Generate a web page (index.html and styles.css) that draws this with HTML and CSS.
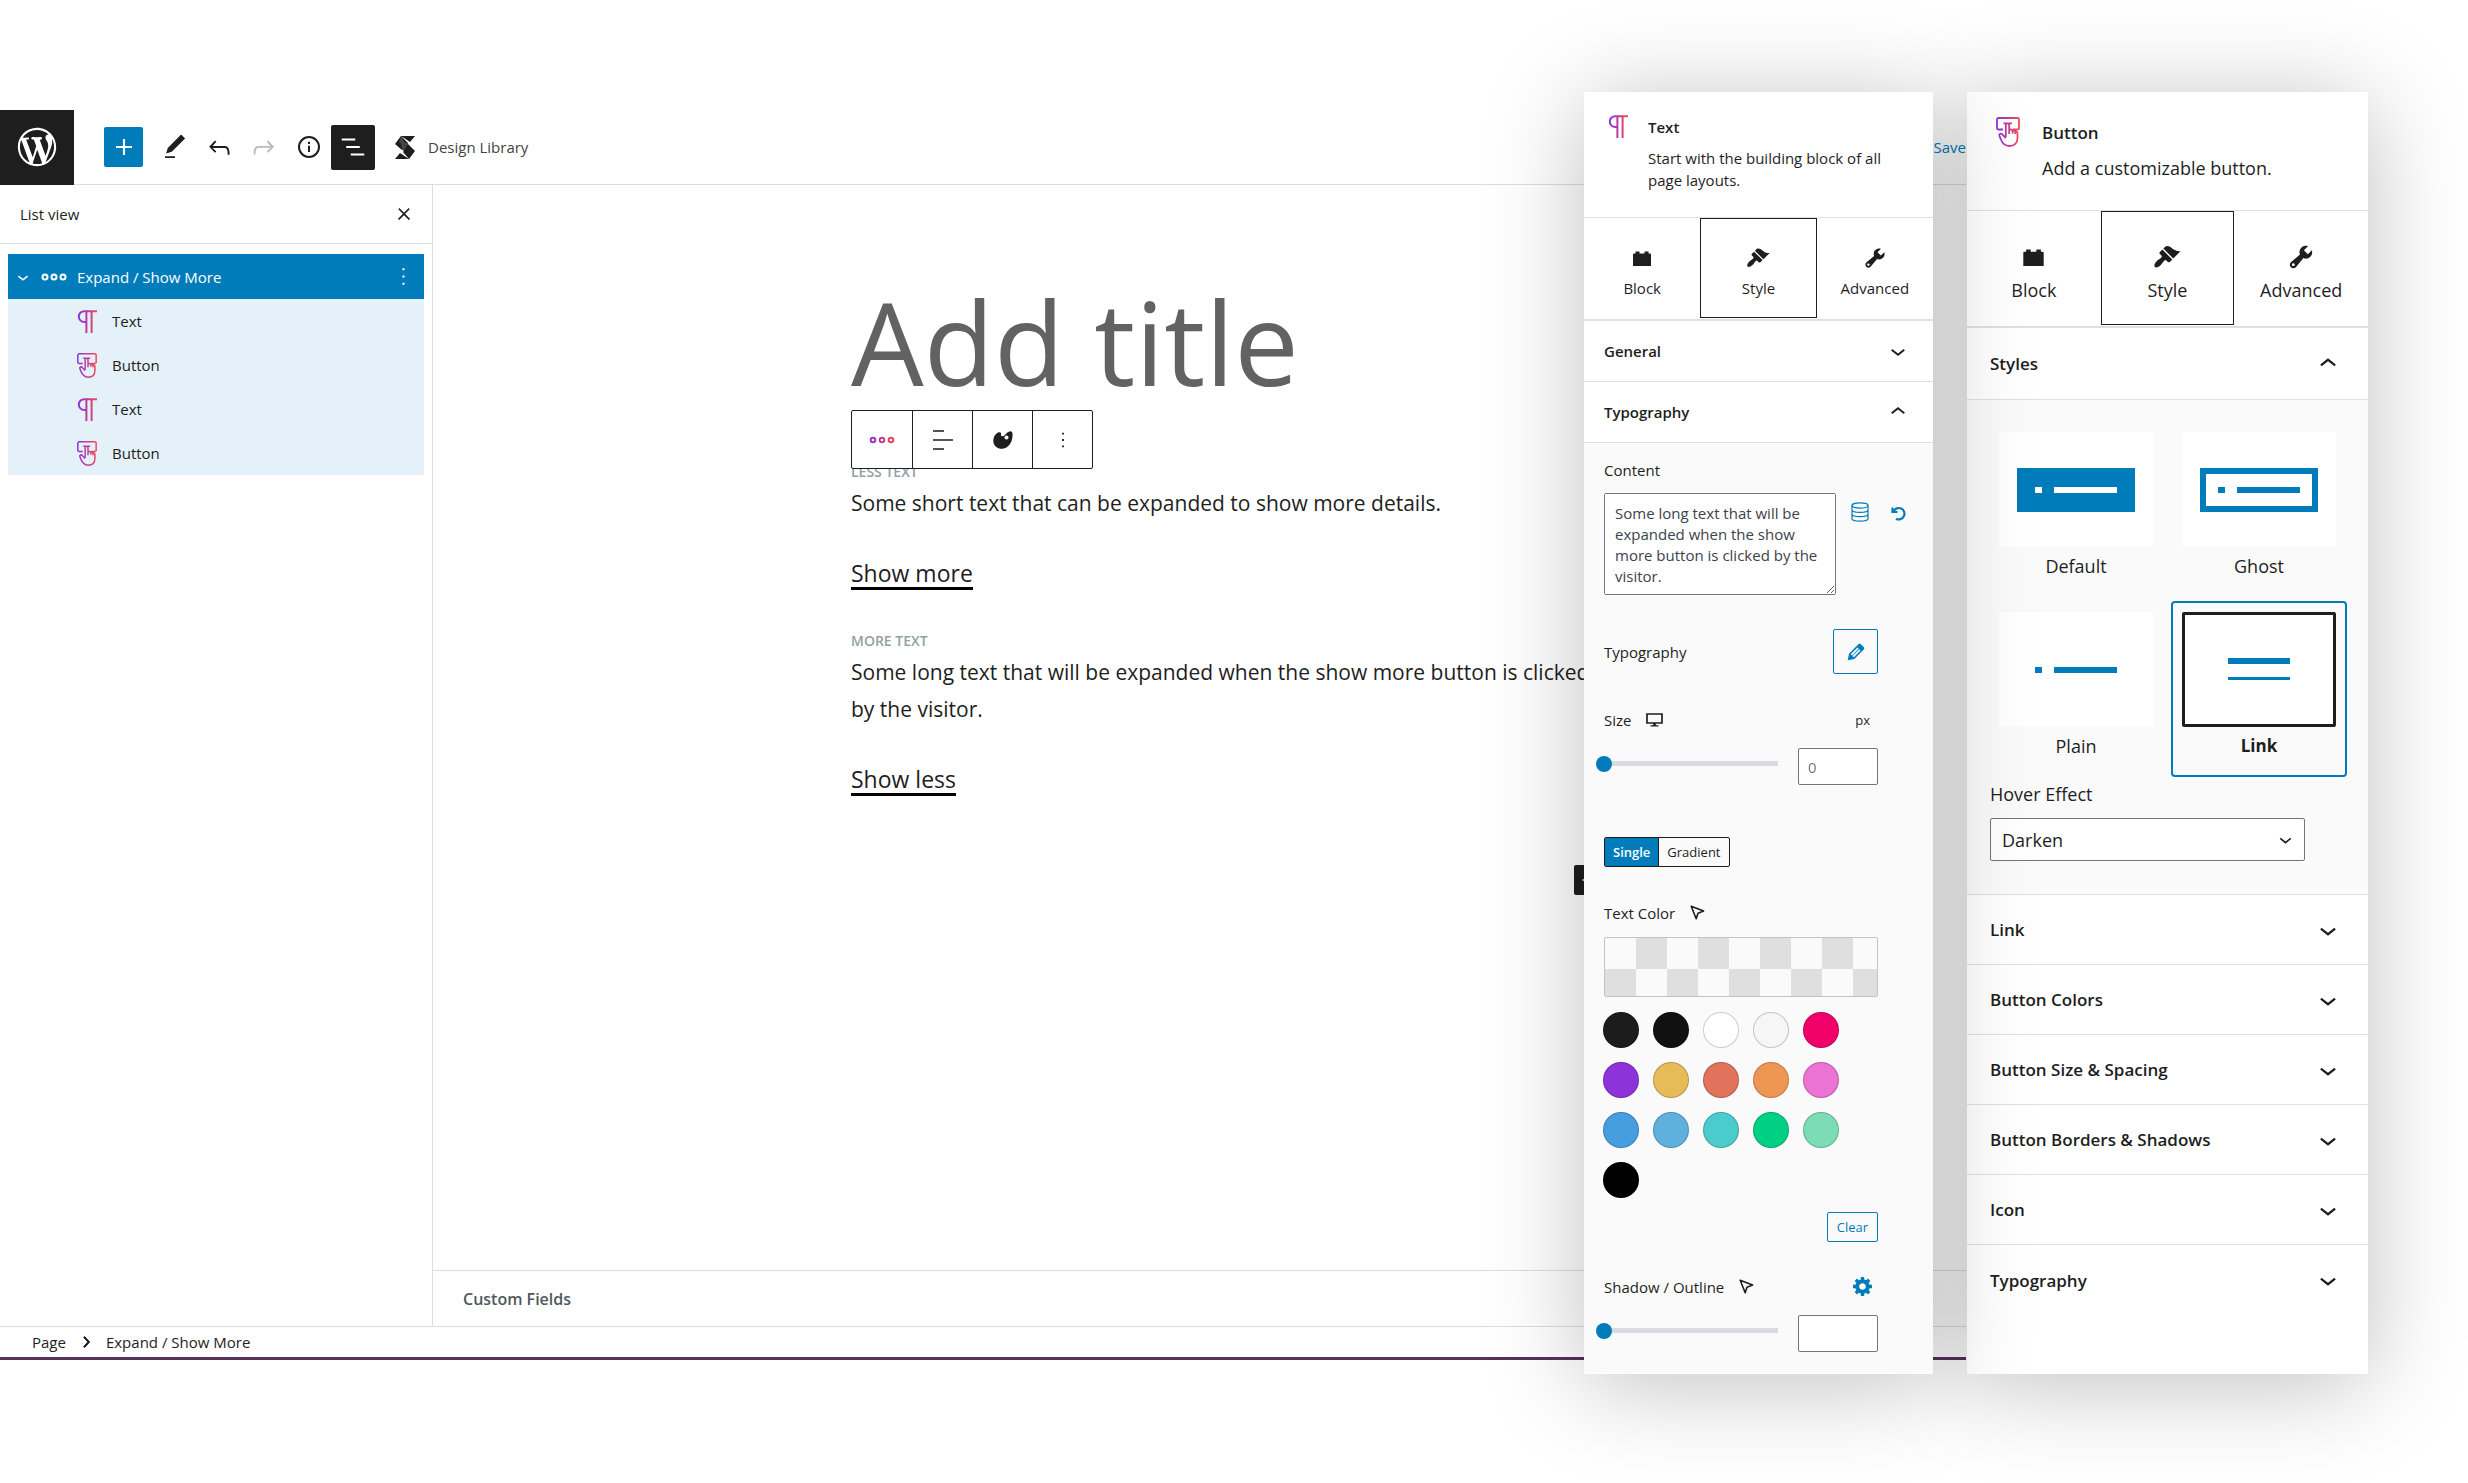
FILE: index.html
```html
<!DOCTYPE html>
<html lang="en">
<head>
  <meta charset="UTF-8" />
  <meta name="viewport" content="width=device-width, initial-scale=1.0"/>
  <title>Expand / Show More</title>
  <link rel="stylesheet" href="styles.css">
</head>
<body>

  <!-- icons -->
  <svg class="sprite" aria-hidden="true">
    <defs>
      <linearGradient id="stk" x1="0" y1="0" x2="1" y2="0">
        <stop offset="0" stop-color="#8c33da"/>
        <stop offset="1" stop-color="#f34957"/>
      </linearGradient>
      <linearGradient id="stk-dots" gradientUnits="userSpaceOnUse" x1="0" y1="0" x2="25" y2="0">
        <stop offset="0" stop-color="#8c33da"/>
        <stop offset="1" stop-color="#f34957"/>
      </linearGradient>
    </defs>
    <symbol id="i-down" viewBox="0 0 24 24"><path d="M17.5 11.6L12 16l-5.5-4.4.9-1.2L12 14l4.5-3.6 1 1.2z"/></symbol>
    <symbol id="i-up" viewBox="0 0 24 24"><path d="M6.5 12.4L12 8l5.5 4.4-.9 1.2L12 10l-4.5 3.6-1-1.2z"/></symbol>
    <symbol id="i-more" viewBox="0 0 24 24"><path d="M11 4h2v2h-2zM11 11h2v2h-2zM11 18h2v2h-2z"/></symbol>
    <symbol id="i-text" viewBox="0 0 20 23"><path fill="none" stroke="url(#stk)" stroke-width="2" d="M20 1.2H7.2a5.4 5.4 0 0 0 0 10.8H9M9.4 1v22M14.6 1v22"/></symbol>
    <symbol id="i-button" viewBox="0 0 24 30">
      <path fill="none" stroke="url(#stk)" stroke-width="1.800" stroke-linejoin="round" d="M7 12.500H2.500A1.500 1.500 0 0 1 1 11V2.500A1.500 1.500 0 0 1 2.500 1h19A1.500 1.500 0 0 1 23 2.500V11a1.500 1.500 0 0 1-1.500 1.500H17M7.500 6.300h8.500M9.800 20V8q0-1.700 1.700-1.700T13.200 8v9M13.200 12.800q2-.8 3.400.6 1.700-.4 2.600 1 2.300-.2 2.300 2.100V21c0 5-3.200 8-8 8-4.500 0-7-2.200-8.800-7l-1.300-3.300c-.5-2 1.700-2.700 2.900-1.300L9.800 21M16.600 13.500v3M19.200 14.500v2.500"/>
    </symbol>
    <symbol id="i-block" viewBox="0 0 18 15"><path d="M0 3.500Q0 2.500 1 2.500H2.500V.5h4v2h5v-2h4v2H17q1 0 1 1V15H0z"/></symbol>
    <symbol id="i-brush" viewBox="0 0 20 20"><path d="M14.480 11.060L7.410 3.990l1.500-1.500c.5-.56 2.300-.47 3.510.32 1.210.8 1.430 1.280 2.910 2.100 1.180.64 2.450 1.260 4.450.85zm-.71.71L6.700 4.700 4.930 6.470a.996.996 0 0 0 0 1.410l1.060 1.060c.39.39.39 1.030 0 1.420-.6.6-1.430 1.110-2.210 1.690-.35.26-.7.53-1.010.84C1.430 14.230.4 16.080 1.400 17.070c.99 1 2.840-.03 4.180-1.360.31-.31.58-.66.85-1.020.57-.78 1.080-1.610 1.690-2.210a.996.996 0 0 1 1.410 0l1.060 1.060c.39.39 1.020.39 1.410 0z"/></symbol>
    <symbol id="i-wrench" viewBox="0 0 20 20"><path d="M16.680 9.770a4.543 4.543 0 0 1-4.950.99l-5.410 6.520c-.99.99-2.590.99-3.580 0s-.99-2.590 0-3.570l6.520-5.420c-.68-1.650-.35-3.610.99-4.950 1.280-1.280 3.120-1.620 4.720-1.060l-2.890 2.890 2.820 2.820 2.860-2.870c.53 1.580.18 3.390-1.080 4.650zM3.810 16.210c.4.39 1.040.39 1.430 0 .4-.4.4-1.040 0-1.430-.39-.4-1.030-.4-1.430 0a1.020 1.020 0 0 0 0 1.430z"/></symbol>
    <symbol id="i-pointer" viewBox="0 0 15 15"><path fill="none" stroke="currentColor" stroke-width="1.600" stroke-linejoin="round" d="M1.200 1.200L13.600 6 8 8.200 6.200 13.700z"/></symbol>
  </svg>

  <div class="editor">
    <header class="toolbar">
      <a class="logo" href="#" aria-label="View pages">
        <svg width="46" height="46" viewBox="-2 -2 24 24"><path d="M20 10c0-5.510-4.490-10-10-10C4.480 0 0 4.490 0 10c0 5.520 4.480 10 10 10 5.510 0 10-4.480 10-10zM7.780 15.370L4.370 6.220c.55-.02 1.170-.08 1.170-.08.5-.06.44-1.130-.06-1.110 0 0-1.450.11-2.370.11-.18 0-.37 0-.58-.01C4.120 2.690 6.870 1.110 10 1.110c2.330 0 4.450.87 6.050 2.340-.68-.11-1.650.39-1.650 1.580 0 .74.45 1.360.9 2.100.35.61.55 1.360.55 2.460 0 1.490-1.400 5-1.400 5l-3.030-8.370c.54-.02.82-.17.82-.17.5-.05.44-1.250-.06-1.220 0 0-1.440.12-2.380.12-.87 0-2.330-.12-2.330-.12-.5-.03-.56 1.200-.06 1.220l.92.08 1.260 3.410zM17.410 10c.24-.64.74-1.870.43-4.250.7 1.290 1.050 2.710 1.050 4.250 0 3.290-1.730 6.240-4.400 7.780.97-2.590 1.940-5.200 2.920-7.780zM6.100 18.090C3.120 16.650 1.110 13.530 1.110 10c0-1.300.23-2.480.72-3.590C3.250 10.300 4.670 14.200 6.100 18.090zm4.030-6.630l2.580 6.980c-.86.29-1.760.45-2.710.45-.79 0-1.570-.11-2.290-.33.81-2.380 1.620-4.740 2.420-7.100z"/></svg>
      </a>
      <div class="tools">
        <button class="tool tool-add" aria-label="Add block"><svg width="32" height="32" viewBox="0 0 24 24"><path d="M18 11.200h-5.200V6h-1.600v5.200H6v1.600h5.200V18h1.600v-5.200H18z"/></svg></button>
        <button class="tool" aria-label="Tools"><svg width="30" height="30" viewBox="0 0 24 24"><path d="M20.100 5.100L16.900 2 6.200 12.700l-1.300 4.400 4.500-1.300L20.100 5.100zM4 20.800h8v-1.500H4v1.500z"/></svg></button>
        <button class="tool" aria-label="Undo"><svg width="31" height="31" viewBox="0 0 24 24"><path d="M18.300 11.700c-.6-.6-1.400-.9-2.300-.9H6.700l2.900-3.300-1.100-1-4.500 5L8.500 16l1-1-2.700-2.700H16c.5 0 .9.2 1.300.5 1 1 1 3.400 1 4.500v.3h1.500v-.2c0-1.500 0-4.300-1.500-5.700z"/></svg></button>
        <button class="tool tool-off" aria-label="Redo"><svg width="31" height="31" viewBox="0 0 24 24"><path d="M15.600 6.500l-1.100 1 2.900 3.300H8c-.9 0-1.700.3-2.300.9-1.400 1.500-1.400 4.200-1.400 5.600v.2h1.500v-.3c0-1.100 0-3.500 1-4.500.3-.3.7-.5 1.300-.5h9.200L14.500 15l1.100 1.100 4.600-4.600-4.600-5z"/></svg></button>
        <button class="tool" aria-label="Details"><svg width="30" height="30" viewBox="0 0 24 24"><circle cx="12" cy="12" r="8" fill="none" stroke="currentColor" stroke-width="1.600"/><path d="M11.200 11h1.600v5h-1.600zM11.200 7.700h1.600v1.800h-1.600z"/></svg></button>
        <button class="tool tool-active" aria-label="List view"><svg width="30" height="30" viewBox="0 0 24 24"><path d="M13.800 5.200H3v1.500h10.800V5.200zm-3.600 12v1.500H21v-1.500H10.200zm7.200-6H6.600v1.500h10.800v-1.500z"/></svg></button>
        <button class="library">
          <svg width="20" height="23" viewBox="0 0 20 23">
            <path fill="#1e1e1e" d="M6 0h14l-5 6zM0 8l6-8 7 7-6 7zM14 23H0l5-6z"/>
            <path fill="#444" d="M6 7l7 0 1 9-7-2zM6 0l4 7H4z"/>
            <path fill="#1e1e1e" d="M13 8l7 7-6 8-6-7z"/>
          </svg>
          Design Library
        </button>
      </div>
      <a class="save" href="#">Save</a>
    </header>

    <div class="middle">
      <aside class="list-view">
        <div class="list-head">
          <span>List view</span>
          <button class="plain" aria-label="Close"><svg width="18" height="18" viewBox="0 0 24 24"><path d="M13 11.800l6.100-6.300-1-1-6.100 6.200-6.100-6.200-1 1 6.100 6.300-6.500 6.700 1 1 6.500-6.600 6.500 6.600 1-1z" stroke="currentColor"/></svg></button>
        </div>
        <ul class="tree">
          <li class="tree-parent">
            <svg width="22" height="22"><use href="#i-down"/></svg>
            <svg width="26" height="10" viewBox="0 0 26 10" fill="none" stroke="currentColor" stroke-width="2"><circle cx="4" cy="5" r="2.500"/><circle cx="13" cy="5" r="2.500"/><circle cx="22" cy="5" r="2.500"/></svg>
            <a href="#">Expand / Show More</a>
            <button class="plain" aria-label="Options"><svg width="25" height="25"><use href="#i-more"/></svg></button>
          </li>
          <li><svg width="20" height="23"><use href="#i-text"/></svg><a href="#">Text</a></li>
          <li><svg width="20" height="25"><use href="#i-button"/></svg><a href="#">Button</a></li>
          <li><svg width="20" height="23"><use href="#i-text"/></svg><a href="#">Text</a></li>
          <li><svg width="20" height="25"><use href="#i-button"/></svg><a href="#">Button</a></li>
        </ul>
      </aside>

      <main class="canvas">
        <div class="content">
          <input class="post-title" type="text" placeholder="Add title" aria-label="Add title">
          <div class="block">
            <div class="block-toolbar">
              <button aria-label="Expand / Show More"><svg width="26" height="10" viewBox="0 0 26 10" fill="none" stroke="url(#stk-dots)" stroke-width="2"><circle cx="4" cy="5" r="2.300"/><circle cx="13" cy="5" r="2.300"/><circle cx="22" cy="5" r="2.300"/></svg></button>
              <button aria-label="Align"><svg width="20" height="20" viewBox="0 0 20 20" fill="#555"><path d="M0 0h11v2H0zM0 9h20v2H0zM0 18h11v2H0z"/></svg></button>
              <button aria-label="Colors"><svg width="20" height="18" viewBox="0 0 20 18"><path d="M5 1.500C7 .6 8.500 1.500 8 3.500 7.600 5.500 10 6 12 4c1.500-1.800 3-3.600 5.500-3.800C20 0 20 4 19 8.500 18 13 14 17.800 9 17.800 4 17.800.3 14.500.3 10 .3 6 2 3 5 1.500z"/><circle cx="13.500" cy="6.500" r="2" fill="#fff"/></svg></button>
              <button aria-label="Options"><svg width="22" height="22"><use href="#i-more"/></svg></button>
            </div>
            <p class="tag">Less text</p>
            <p class="para">Some short text that can be expanded to show more details.</p>
            <p class="toggle"><a href="#">Show more</a></p>
            <p class="tag">More text</p>
            <p class="para">Some long text that will be expanded when the show more button is clicked by the visitor.</p>
            <p class="toggle"><a href="#">Show less</a></p>
          </div>
          <button class="appender" aria-label="Add block"><svg width="26" height="26" viewBox="0 0 24 24"><path d="M18 11.200h-5.200V6h-1.600v5.200H6v1.600h5.200V18h1.600v-5.200H18z"/></svg></button>
        </div>
        <h2 class="meta">Custom Fields</h2>
      </main>
    </div>

    <footer class="crumbs">
      <a href="#">Page</a>
      <svg width="22" height="22" viewBox="0 0 24 24"><path d="M10.600 6L9.400 7l4.600 5-4.600 5 1.200 1 5.400-6z" stroke="currentColor"/></svg>
      <a href="#">Expand / Show More</a>
    </footer>
  </div>

  <div class="panels">
    <section class="panel panel-text">
      <header class="panel-head">
        <svg width="20" height="23"><use href="#i-text"/></svg>
        <div>
          <h2>Text</h2>
          <p>Start with the building block of all page layouts.</p>
        </div>
      </header>
      <nav class="tabs">
        <button><svg width="18" height="15"><use href="#i-block"/></svg>Block</button>
        <button class="on"><svg width="24" height="24"><use href="#i-brush"/></svg>Style</button>
        <button><svg width="24" height="24"><use href="#i-wrench"/></svg>Advanced</button>
      </nav>
      <button class="row">General <svg><use href="#i-down"/></svg></button>
      <button class="row">Typography <svg><use href="#i-up"/></svg></button>
      <div class="body">
        <label for="content">Content</label>
        <div class="content-field">
          <textarea id="content">Some long text that will be expanded when the show more button is clicked by the visitor.</textarea>
          <button class="plain blue" aria-label="Dynamic content"><svg width="18" height="20" viewBox="0 0 18 20" fill="none" stroke="currentColor" stroke-width="1.200"><ellipse cx="9" cy="3.500" rx="8" ry="2.700"/><path d="M1 3.500v13c0 1.500 3.600 2.700 8 2.700s8-1.200 8-2.700v-13M1 7.700c0 1.500 3.600 2.700 8 2.700s8-1.200 8-2.700M1 12c0 1.500 3.600 2.700 8 2.700s8-1.200 8-2.700"/></svg></button>
          <button class="plain blue" aria-label="Reset"><svg width="15" height="15" viewBox="0 0 15 15" fill="none" stroke="currentColor" stroke-width="2.200"><path d="M2.500 5.500A5.700 5.700 0 1 1 5 12.700"/><path d="M1.500 1.500v4.500h5"/></svg></button>
        </div>
        <div class="line">
          <span>Typography</span>
          <button class="edit" aria-label="Edit typography"><svg width="24" height="24" viewBox="0 0 20 20"><path d="M13.890 3.390l2.710 2.720c.46.46.42 1.240.03 1.640l-8.010 8.020-5.560 1.160 1.160-5.580s7.600-7.630 7.990-8.030c.39-.39 1.220-.39 1.680.07zm-2.730 2.790l-5.590 5.610 1.110 1.110 5.540-5.650zm-2.970 8.230l5.580-5.600-1.070-1.080-5.590 5.600z"/></svg></button>
        </div>
        <div class="line line-size">
          <label for="size">Size</label>
          <svg width="17" height="14" viewBox="0 0 17 14"><path fill="none" stroke="currentColor" stroke-width="1.700" d="M1 1h15v9H1z"/><path d="M7.200 10h2.600v2.200h2.700V13.500h-8v-1.300h2.700z"/></svg>
          <span class="unit">px</span>
        </div>
        <div class="slider">
          <input type="range" min="0" max="100" value="0" aria-label="Size slider">
          <input type="text" id="size" placeholder="0">
        </div>
        <div class="segment">
          <button class="on">Single</button><button>Gradient</button>
        </div>
        <div class="line line-color">
          <span>Text Color</span>
          <svg width="15" height="15"><use href="#i-pointer"/></svg>
        </div>
        <button class="checker" aria-label="Custom color"></button>
        <div class="swatches">
          <button class="c1" aria-label="Dark"></button>
          <button class="c2" aria-label="Black"></button>
          <button class="c3" aria-label="White"></button>
          <button class="c4" aria-label="Light gray"></button>
          <button class="c5" aria-label="Pink"></button>
          <button class="c6" aria-label="Purple"></button>
          <button class="c7" aria-label="Yellow"></button>
          <button class="c8" aria-label="Red"></button>
          <button class="c9" aria-label="Orange"></button>
          <button class="c10" aria-label="Orchid"></button>
          <button class="c11" aria-label="Blue"></button>
          <button class="c12" aria-label="Light blue"></button>
          <button class="c13" aria-label="Teal"></button>
          <button class="c14" aria-label="Green"></button>
          <button class="c15" aria-label="Mint"></button>
          <button class="c16" aria-label="Pure black"></button>
        </div>
        <button class="clear">Clear</button>
        <div class="line line-shadow">
          <label for="shadow">Shadow / Outline</label>
          <svg width="15" height="15"><use href="#i-pointer"/></svg>
          <button class="plain blue gear" aria-label="Shadow settings"><svg width="19" height="19" viewBox="1 2 17 17"><path d="M18 12h-2.180c-.17.7-.44 1.350-.81 1.930l1.540 1.540-2.100 2.100-1.540-1.540c-.58.36-1.230.63-1.910.79V19H8v-2.180c-.68-.16-1.330-.43-1.910-.79l-1.540 1.540-2.120-2.120 1.540-1.540c-.36-.58-.63-1.230-.79-1.910H1V9.030h2.170c.16-.7.44-1.350.8-1.940L2.430 5.550l2.100-2.100 1.540 1.540c.58-.37 1.240-.64 1.930-.81V2h3v2.180c.68.16 1.330.43 1.910.79l1.540-1.540 2.120 2.120-1.540 1.540c.36.59.64 1.240.8 1.940H18V12zm-8.500 1.500c1.660 0 3-1.340 3-3s-1.340-3-3-3-3 1.340-3 3 1.340 3 3 3z"/></svg></button>
        </div>
        <div class="slider">
          <input type="range" min="0" max="100" value="0" aria-label="Shadow slider">
          <input type="text" id="shadow">
        </div>
      </div>
    </section>

    <section class="panel panel-button">
      <header class="panel-head">
        <svg width="24" height="30"><use href="#i-button"/></svg>
        <div>
          <h2>Button</h2>
          <p>Add a customizable button.</p>
        </div>
      </header>
      <nav class="tabs">
        <button><svg width="21" height="17"><use href="#i-block"/></svg>Block</button>
        <button class="on"><svg width="28" height="28"><use href="#i-brush"/></svg>Style</button>
        <button><svg width="28" height="28"><use href="#i-wrench"/></svg>Advanced</button>
      </nav>
      <button class="row row-open">Styles <svg><use href="#i-up"/></svg></button>
      <div class="body">
        <div class="styles">
          <button class="style"><span class="thumb"><svg width="118" height="44" viewBox="0 0 118 44"><path d="M0 0h118v44H0z"/><path fill="#fff" d="M18 19h7v6h-7zM37 19h63v6H37z"/></svg></span>Default</button>
          <button class="style"><span class="thumb"><svg width="118" height="44" viewBox="0 0 118 44"><path fill="none" stroke="#007cba" stroke-width="6" d="M3 3h112v38H3z"/><path d="M18 19h7v6h-7zM37 19h63v6H37z"/></svg></span>Ghost</button>
          <button class="style"><span class="thumb"><svg width="118" height="44" viewBox="0 0 118 44"><path d="M18 19h7v6h-7zM37 19h63v6H37z"/></svg></span>Plain</button>
          <button class="style on"><span class="thumb"><svg width="118" height="44" viewBox="0 0 118 44"><path d="M28 10h62v6H28zM28 29h62v3H28z"/></svg></span>Link</button>
        </div>
        <label for="hover">Hover Effect</label>
        <div class="select">
          <select id="hover">
            <option>Darken</option>
          </select>
          <svg width="25" height="25"><use href="#i-down"/></svg>
        </div>
      </div>
      <button class="row">Link <svg><use href="#i-down"/></svg></button>
      <button class="row">Button Colors <svg><use href="#i-down"/></svg></button>
      <button class="row">Button Size &amp; Spacing <svg><use href="#i-down"/></svg></button>
      <button class="row">Button Borders &amp; Shadows <svg><use href="#i-down"/></svg></button>
      <button class="row">Icon <svg><use href="#i-down"/></svg></button>
      <button class="row">Typography <svg><use href="#i-down"/></svg></button>
    </section>
  </div>

</body>
</html>
```
FILE: styles.css
```css
* {
  box-sizing: border-box;
  margin: 0;
  padding: 0;
}

body {
  font-family: "Open Sans", "Noto Sans", sans-serif;
  font-size: 15px;
  color: #1e1e1e;
  background-color: #fff;
  position: relative;
  min-height: 100vh;
  padding: 110px 502px 0 0;
  overflow: hidden;
}

svg {
  flex: none;
}

svg:not([fill]) {
  fill: currentColor;
}

a {
  color: inherit;
  text-decoration: none;
}

button, input, textarea, select {
  font: inherit;
  color: inherit;
}

button {
  background: none;
  border: none;
  cursor: pointer;
}

.sprite {
  position: absolute;
  width: 0;
  height: 0;
}

.plain {
  display: flex;
}

.blue {
  color: #007cba;
}

/* EDITOR */
.editor {
  display: flex;
  flex-direction: column;
  height: 1250px;
  border-bottom: 3px solid #56315a;
}

.toolbar {
  display: flex;
  align-items: center;
  height: 75px;
  border-bottom: 1px solid #ddd;
}

.logo {
  display: flex;
  align-items: center;
  justify-content: center;
  width: 74px;
  height: 75px;
  background-color: #1e1e1e;
  color: #fff;
}

.tools {
  display: flex;
  align-items: center;
  padding-left: 30px;
}

.tool {
  display: flex;
  align-items: center;
  justify-content: center;
  width: 44px;
  height: 45px;
  border-radius: 2px;
}

.tool-add {
  width: 39px;
  height: 40px;
  margin-right: 10px;
  background-color: #007cba;
  color: #fff;
}

.tool-off {
  margin-right: 2px;
  color: #bbb;
}

.tool-active {
  background-color: #1e1e1e;
  color: #fff;
}

.library {
  display: flex;
  align-items: center;
  gap: 13px;
  padding-left: 20px;
  color: #444;
}

.save {
  margin-left: auto;
  color: #007cba;
}

.middle {
  display: flex;
  flex: 1;
}

.list-view {
  width: 433px;
  border-right: 1px solid #ddd;
}

.list-head {
  display: flex;
  align-items: center;
  justify-content: space-between;
  height: 59px;
  padding: 0 19px 0 20px;
  border-bottom: 1px solid #ddd;
}

.tree {
  list-style: none;
  margin: 10px 8px;
  background-color: #e5f1f8;
}

.tree li {
  display: flex;
  align-items: center;
  gap: 15px;
  height: 44px;
  padding-left: 69px;
}

.tree .tree-parent {
  gap: 7px;
  height: 45px;
  padding: 0 8px 0 4px;
  background-color: #007cba;
  color: #fff;
}

.tree-parent a {
  flex: 1;
  padding-left: 3px;
}

.canvas {
  display: flex;
  flex-direction: column;
  flex: 1;
}

.content {
  flex: 1;
  width: 753px;
  margin-left: 418px;
  padding-top: 88px;
}

.post-title {
  display: block;
  width: 100%;
  height: 137px;
  border: none;
  outline: none;
  background: none;
  font-size: 115px;
}

.post-title::placeholder {
  color: #626262;
  opacity: 1;
}

.block {
  position: relative;
  padding-top: 53px;
}

.block-toolbar {
  position: absolute;
  top: 0;
  left: 0;
  display: flex;
  height: 59px;
  background-color: #fff;
  border: 1px solid #1e1e1e;
  border-radius: 2px;
}

.block-toolbar button {
  display: flex;
  align-items: center;
  justify-content: center;
  width: 60px;
}

.block-toolbar button + button {
  border-left: 1px solid #1e1e1e;
}

.tag {
  font-size: 14px;
  font-weight: 600;
  line-height: 18px;
  text-transform: uppercase;
  color: #949fa6;
}

.para {
  font-size: 21px;
  line-height: 37px;
  padding-top: 4px;
}

.toggle {
  font-size: 23px;
  line-height: 32px;
  padding: 35px 0 42px;
}

.toggle a {
  display: inline-block;
  line-height: 28px;
  border-bottom: 3px solid #000;
}

.appender {
  display: flex;
  align-items: center;
  justify-content: center;
  width: 30px;
  height: 30px;
  margin: 27px 0 0 auto;
  border-radius: 2px;
  background-color: #1e1e1e;
  color: #fff;
}

.meta {
  height: 56px;
  padding-left: 30px;
  border-top: 1px solid #ddd;
  font-size: 16px;
  font-weight: 600;
  line-height: 56px;
  color: #50575e;
}

.crumbs {
  display: flex;
  align-items: center;
  gap: 9px;
  height: 31px;
  padding-left: 32px;
  border-top: 1px solid #ddd;
}

/* PANELS */
.panels {
  position: absolute;
  top: 92px;
  right: 100px;
  display: flex;
  gap: 34px;
}

.panel {
  height: 1282px;
  background-color: #fff;
  box-shadow: 0 10px 90px rgba(0, 0, 0, 0.25);
}

.panel-text {
  position: relative;
  z-index: 1;
  width: 349px;
}

.panel-button {
  width: 401px;
  font-size: 18px;
}

.panel-head {
  display: flex;
  gap: 20px;
  height: 126px;
  padding: 23px 30px 0 24px;
  border-bottom: 1px solid #e0e0e0;
}

.panel-head h2 {
  font-size: 15px;
  font-weight: 600;
  line-height: 24px;
}

.panel-head p {
  line-height: 22px;
  padding-top: 8px;
}

.panel-button .panel-head {
  gap: 22px;
  height: 119px;
  padding: 25px 30px 0 29px;
}

.panel-button .panel-head h2 {
  font-size: 17px;
  line-height: 32px;
}

.tabs {
  display: grid;
  grid-template-columns: repeat(3, 1fr);
  height: 103px;
  padding-bottom: 1px;
  border-bottom: 2px solid #e0e0e0;
}

.tabs button {
  display: grid;
  grid-template-rows: 28px 22px;
  gap: 5px;
  align-items: center;
  justify-items: center;
  padding-top: 25px;
  align-content: start;
  border: 1px solid transparent;
}

.tabs .on {
  border-color: #1e1e1e;
}

.panel-button .tabs {
  height: 117px;
}

.panel-button .tabs button {
  gap: 8px;
  padding-top: 31px;
}

.row {
  display: flex;
  align-items: center;
  justify-content: space-between;
  width: 100%;
  height: 61px;
  padding: 0 20px;
  border-bottom: 1px solid #e0e0e0;
  font-weight: 600;
}

.row svg {
  width: 30px;
  height: 30px;
}

.panel-button .row {
  height: 70px;
  padding: 0 23px;
  font-size: 17px;
}

.panel-button .row-open {
  height: 72px;
}

.panel-button .row svg {
  width: 34px;
  height: 34px;
}

.panel-button .row:last-child {
  border: none;
}

.body {
  height: 930px;
  padding: 16px 55px 0 20px;
  background-color: #fafafa;
}

.body label, .body span {
  line-height: 22px;
}

.content-field {
  display: flex;
  align-items: start;
  margin: 12px -30px 34px 0;
}

.content-field textarea {
  width: 232px;
  height: 102px;
  padding: 9px 10px;
  border: 1px solid #757575;
  border-radius: 2px;
  background-color: #fff;
  color: #3c434a;
  line-height: 21px;
  resize: vertical;
}

.content-field button {
  margin: 9px 0 0 15px;
}

.content-field button + button {
  margin: 13px 0 0 22px;
}

.line {
  display: flex;
  align-items: center;
  height: 45px;
}

.line svg + .unit {
  margin-left: auto;
  padding-right: 8px;
  font-size: 13px;
}

.line > svg {
  margin-left: 15px;
}

.edit {
  display: flex;
  align-items: center;
  justify-content: center;
  width: 45px;
  height: 45px;
  margin-left: auto;
  border: 1px solid #007cba;
  border-radius: 2px;
  color: #007cba;
}

.line-size {
  margin-top: 23px;
}

.slider {
  display: flex;
  align-items: center;
  justify-content: space-between;
  height: 37px;
  margin: 6px 0 52px -8px;
}

.slider input[type="range"] {
  appearance: none;
  width: 182px;
  height: 16px;
  margin-bottom: 6px;
  background: linear-gradient(#d8dbe0, #d8dbe0) 8px center / 174px 5px no-repeat;
}

.slider input[type="range"]::-webkit-slider-thumb {
  appearance: none;
  width: 16px;
  height: 16px;
  border-radius: 50%;
  background-color: #007cba;
}

.slider input[type="text"] {
  width: 80px;
  height: 37px;
  padding-left: 9px;
  border: 1px solid #757575;
  border-radius: 2px;
  background-color: #fff;
}

.segment {
  display: inline-flex;
  height: 30px;
  border: 1px solid #1e1e1e;
  border-radius: 2px;
  font-size: 13px;
}

.segment button {
  padding: 0 8px;
}

.segment .on {
  background-color: #007cba;
  border-right: 1px solid #1e1e1e;
  color: #fff;
  font-weight: 600;
}

.line-color {
  height: 49px;
  margin-top: 21px;
}

.checker {
  display: block;
  width: 100%;
  height: 60px;
  border: 1px solid #c4c4c4;
  border-radius: 2px;
  background: conic-gradient(#dfdfdf 25%, #fafafa 0 50%, #dfdfdf 0 75%, #fafafa 0) 0 0 / 62px 62px;
}

.swatches {
  display: grid;
  grid-template-columns: repeat(5, 36px);
  gap: 14px;
  margin: 15px 0 14px -1px;
}

.swatches button {
  height: 36px;
  border: 1px solid rgba(0, 0, 0, 0.2);
  border-radius: 50%;
}

.c1 { background-color: #1c1c1c; }
.c2 { background-color: #111; }
.c3 { background-color: #fff; }
.c4 { background-color: #f6f6f6; }
.c5 { background-color: #f00069; }
.c6 { background-color: #8d33da; }
.c7 { background-color: #e8bb59; }
.c8 { background-color: #e1735d; }
.c9 { background-color: #ee9755; }
.c10 { background-color: #ea73d4; }
.c11 { background-color: #479edf; }
.c12 { background-color: #5fb1dd; }
.c13 { background-color: #4acbcc; }
.c14 { background-color: #00d084; }
.c15 { background-color: #7bdcb5; }
.c16 { background-color: #000; }

.clear {
  display: block;
  height: 30px;
  margin-left: auto;
  padding: 0 9px;
  border: 1px solid #007cba;
  border-radius: 2px;
  color: #007cba;
  font-size: 13px;
}

.line-shadow {
  margin-top: 22px;
}

.gear {
  margin-left: auto;
  margin-right: 6px;
}

.panel-button .body {
  height: 495px;
  padding: 21px 20px 0 23px;
  border-bottom: 1px solid #e0e0e0;
}

.styles {
  display: grid;
  grid-template-columns: 176px 176px;
  gap: 4px 7px;
  margin-left: -2px;
}

.style {
  display: flex;
  flex-direction: column;
  align-items: center;
  height: 176px;
  padding-top: 9px;
  border: 2px solid transparent;
  border-radius: 4px;
  line-height: 34px;
}

.thumb {
  display: flex;
  align-items: center;
  justify-content: center;
  width: 154px;
  height: 115px;
  margin-bottom: 2px;
  border: 3px solid #fff;
  border-radius: 2px;
  background-color: #fff;
  color: #007cba;
}

.style.on {
  border-color: #007cba;
  font-size: 17px;
  font-weight: 700;
}

.style.on .thumb {
  border-color: #1e1e1e;
}

.panel-button .body label {
  display: block;
  margin: 6px 0 13px;
}

.select {
  display: flex;
  align-items: center;
  width: 315px;
  height: 43px;
  border: 1px solid #757575;
  border-radius: 2px;
  background-color: #fff;
}

.select select {
  appearance: none;
  flex: 1;
  height: 100%;
  margin-right: -32px;
  padding: 0 32px 0 11px;
  border: none;
  background: none;
}

.select svg {
  margin-right: 6px;
  pointer-events: none;
}
```
